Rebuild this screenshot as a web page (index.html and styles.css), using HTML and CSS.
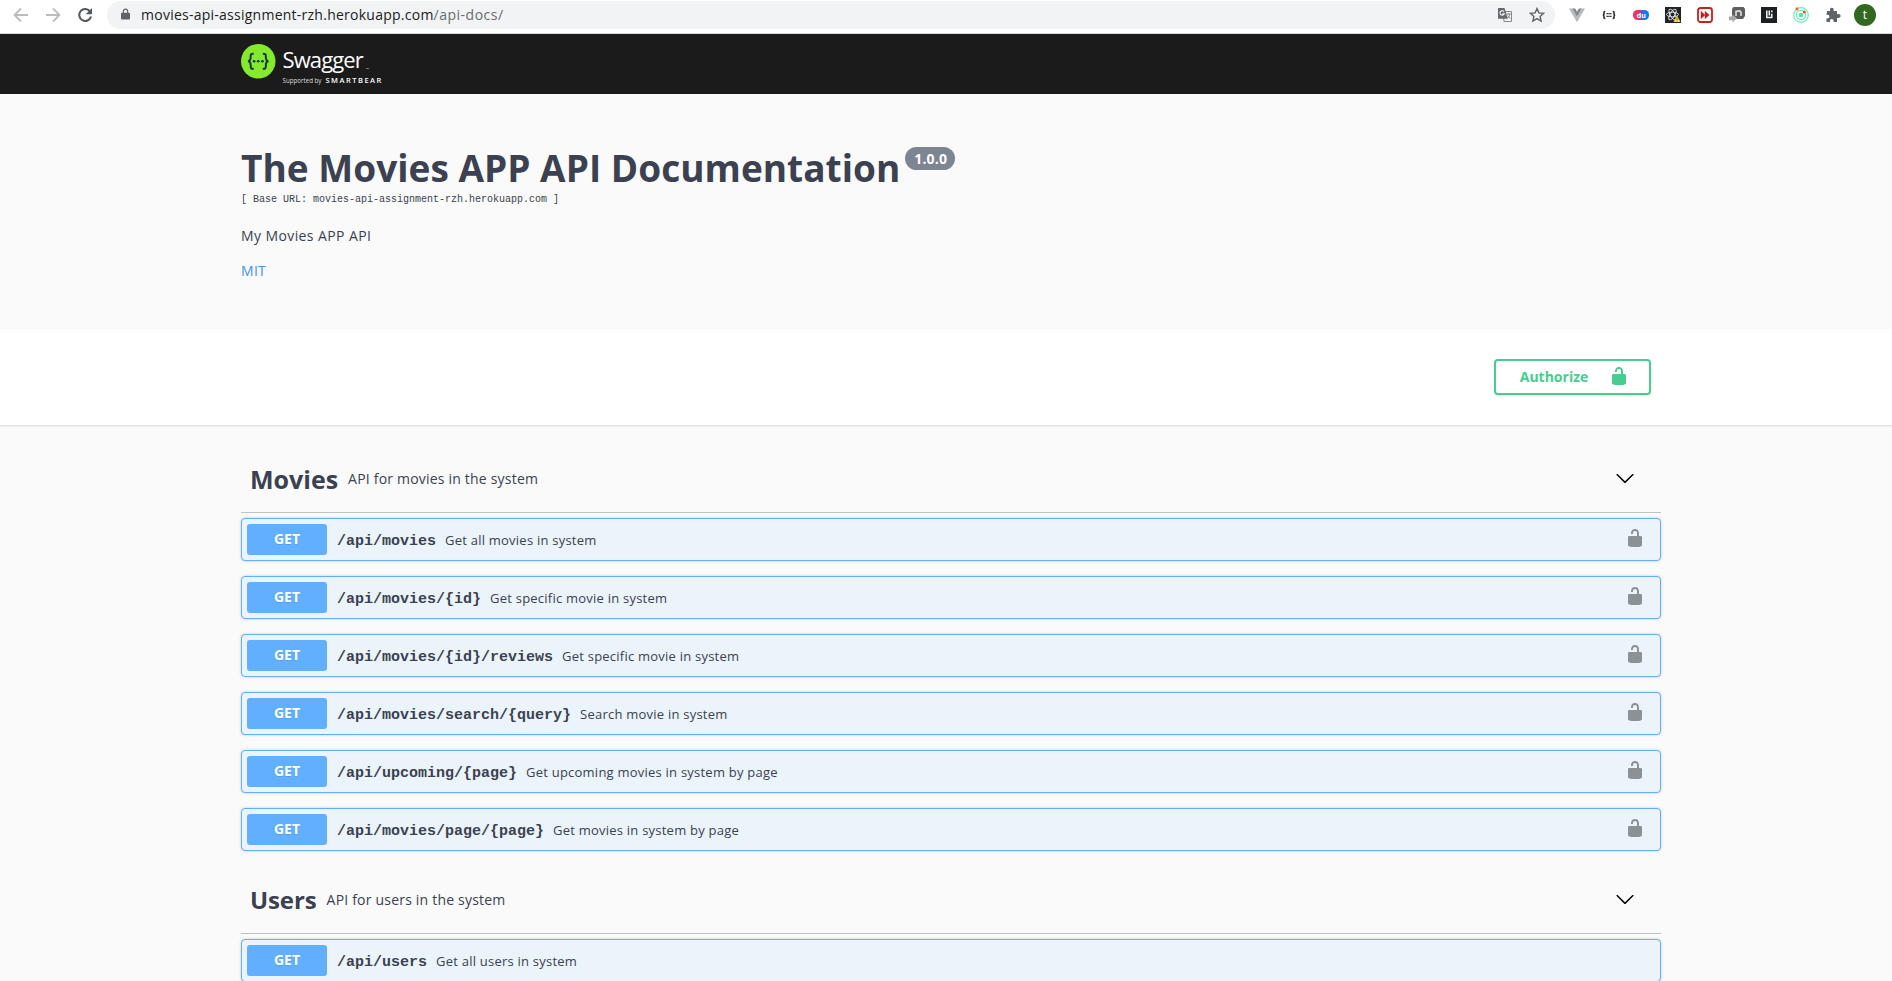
FILE: index.html
```
<!DOCTYPE html>
<html lang="en">
<head>
<meta charset="utf-8">
<title>Swagger UI</title>
<link rel="stylesheet" href="styles.css">
</head>
<body>
<svg class="defs" aria-hidden="true">
  <symbol id="unlocked" viewBox="0 0 20 20"><path d="M15.8 8H14V5.6C14 2.703 12.665 1 10 1 7.334 1 6 2.703 6 5.6V6h2v-.801C8 3.754 8.797 3 10 3c1.203 0 2 .754 2 2.199V8H4c-.553 0-1 .646-1 1.199V17c0 .549.428 1.139.951 1.307l1.197.387C5.672 18.861 6.55 19 7.1 19h5.8c.549 0 1.428-.139 1.951-.307l1.196-.387c.524-.167.953-.757.953-1.306V9.199C17 8.646 16.352 8 15.8 8z"/></symbol>
  <symbol id="arrow" viewBox="0 0 20 20"><path d="M17.418 6.109c.272-.268.709-.268.979 0s.271.701 0 .969l-7.908 7.83c-.27.268-.707.268-.979 0l-7.908-7.83c-.27-.268-.27-.701 0-.969.271-.268.709-.268.979 0L10 13.25l7.418-7.141z"/></symbol>
</svg>

<header class="browser">
  <svg class="nav" viewBox="0 0 16 16"><path d="M15 8H2M8 1.500L1.500 8L8 14.500" fill="none" stroke="#babcbe" stroke-width="1.800"/></svg>
  <svg class="nav" viewBox="0 0 16 16"><path d="M1 8h13M8 1.500L14.500 8L8 14.500" fill="none" stroke="#babcbe" stroke-width="1.800"/></svg>
  <svg class="nav" viewBox="0 0 16 16"><path d="M13.200 4.600A6 6 0 1 0 14 9.500" fill="none" stroke="#55595e" stroke-width="2.100"/><path d="M15 1v6.300H8.700z" fill="#55595e"/></svg>
  <div class="omnibox">
    <svg class="padlock" viewBox="0 0 10 12"><path d="M1 4.500h8a1 1 0 0 1 1 1V11a1 1 0 0 1-1 1H1a1 1 0 0 1-1-1V5.500a1 1 0 0 1 1-1z" fill="#5f6368"/><path d="M2.600 5V3a2.400 2.400 0 0 1 4.800 0v2" fill="none" stroke="#5f6368" stroke-width="1.300"/></svg>
    <div class="address"><span class="host">movies-api-assignment-rzh.herokuapp.com</span><span class="path">/api-docs/</span></div>
    <svg class="translate" viewBox="0 0 16 16"><path d="M6 4.500h8.500v10H7z" fill="#f1f3f4" stroke="#85898c"/><path d="M1 1h6.500l3.300 10.800H1z" fill="#66696d"/><path d="M7 4.600a2.200 2.200 0 1 0 .3 2.100H5.400" fill="none" stroke="#fff" stroke-width="1.100"/><path d="M9.300 7h4.500M11.600 6v1M13 7c-.5 2-1.500 3.500-3 4.500M10.600 8.500l2.700 3.200" fill="none" stroke="#85898c"/></svg>
    <svg class="star" viewBox="0 0 16 16"><path d="M8 1.600l1.900 4.300 4.700.4-3.500 3.100 1 4.600L8 11.600 3.900 14l1-4.600L1.400 6.300l4.700-.4z" fill="none" stroke="#5f6368" stroke-width="1.400"/></svg>
  </div>
  <div class="extensions">
    <svg viewBox="0 0 16 16"><path d="M0 1.500h3.200L8 9.800l4.800-8.300H16L8 15.200z" fill="#b9babb"/><path d="M3.200 1.500h3L8 4.700l1.800-3.200h3L8 9.800z" fill="#85898c"/></svg>
    <svg viewBox="0 0 16 16"><path d="M4.300 4.500c-1.800 0-1.300.8-1.300 2.200S2.500 8 1.800 8C2.500 8 3 8 3 9.300s-.500 2.200 1.300 2.200M11.700 4.500c1.800 0 1.300.8 1.300 2.200s.5 1.300 1.200 1.300c-.7 0-1.200 0-1.200 1.300s.5 2.200-1.300 2.200" fill="none" stroke="#222" stroke-width="1.500"/><path d="M5.500 6.600h5M5.500 9.300h5" stroke="#222" stroke-width="1.300" stroke-dasharray="1.400 .4"/></svg>
    <svg viewBox="0 0 16 16"><defs><linearGradient id="du"><stop offset=".3" stop-color="#f0355e"/><stop offset=".5" stop-color="#9048a0"/><stop offset=".65" stop-color="#1479ee"/></linearGradient></defs><rect y="3" width="16" height="10" rx="4.500" fill="url(#du)"/><text x="3.800" y="10.600" class="du">du</text></svg>
    <svg viewBox="0 0 16 16"><path fill="#20232a" d="M0 0h16v16H0z"/><g fill="none" stroke="#e8e8e8" stroke-width=".9"><ellipse cx="7.500" cy="7.500" rx="6" ry="2.300"/><ellipse cx="7.500" cy="7.500" rx="6" ry="2.300" transform="rotate(60 7.500 7.500)"/><ellipse cx="7.500" cy="7.500" rx="6" ry="2.300" transform="rotate(120 7.500 7.500)"/></g><path d="M12 8.500l3.500 6.500H8.500z" fill="#f6e62a"/><path d="M12 10.500v2.300M12 13.500v.8" stroke="#555"/></svg>
    <svg viewBox="0 0 16 16"><rect x="1" y="1" width="14" height="14" rx="2.500" fill="#fff" stroke="#c4211c" stroke-width="1.800"/><path d="M4 4.300v7.400L8 8zM8 4.300v7.400L12.300 8z" fill="#c4211c" stroke="#c4211c" stroke-width=".4"/></svg>
    <svg viewBox="0 0 16 16"><path d="M4.500 0h10L16 2v7l-2 3H5L3 9V2z" fill="#5c5e60"/><path d="M7 9V3.500M7 5.300c1-2 5-2 5 .7v3" fill="none" stroke="#ddd" stroke-width="1.600"/><path d="M0 9.500h3.500v-2L8 11.300 3.500 15.500v-2.300H0z" fill="#a5a6a8"/></svg>
    <svg viewBox="0 0 16 16"><path fill="#1e1f21" d="M0 0h16v16H0z"/><path d="M5.800 3.500v7h5V6.800M8.300 3.500v5M10.800 3.500v1.800" fill="none" stroke="#f4f4f4" stroke-width="1.500"/></svg>
    <svg viewBox="0 0 16 16"><g fill="none" stroke="#6eebb5" stroke-width="1.200"><circle cx="8" cy="8" r="7.300"/><circle cx="8" cy="8" r="4.700"/></g><circle cx="8" cy="8" r="2.300" fill="#55e5a0"/><circle cx="4" cy="1.900" r="1.600" fill="#f56b38"/><circle cx="11.300" cy="5" r="1.500" fill="#f34b2e"/></svg>
    <svg viewBox="0 0 16 16"><path d="M2 4h3.200C4.500 1.900 5.400.8 6.800.8S9.100 1.900 8.500 4H12v3.300c2.200-.7 3.600.3 3.600 1.700s-1.400 2.400-3.600 1.700V15H8.600c.4-2.100-.5-3-1.800-3s-2.200.9-1.800 3H1.500v-3.700c2.100.4 2.900-.5 2.900-1.700S3.500 7.500 1.500 7.900z" fill="#5f6368"/></svg>
  </div>
  <div class="avatar">t</div>
</header>

<div class="topbar"><div class="wrapper brand">
  <svg class="brand-mark" viewBox="0 0 34 34"><circle cx="17" cy="17" r="17" fill="#85ea2d"/><g fill="none" stroke="#173647" stroke-width="2"><path d="M12.500 9.500c-3 0-3 .8-3 3.500 0 2.500-.5 4-2.700 4 2.200 0 2.700 1.500 2.700 4 0 2.700 0 3.500 3 3.500M21.500 9.500c3 0 3 .8 3 3.500 0 2.500.5 4 2.700 4-2.200 0-2.700 1.500-2.700 4 0 2.700 0 3.500-3 3.500"/></g><g fill="#173647"><circle cx="12.900" cy="17" r="1.350"/><circle cx="17" cy="17" r="1.350"/><circle cx="21.100" cy="17" r="1.350"/></g></svg>
  <div class="brand-text"><div class="brand-name">Swagger<i class="tm"></i></div><div class="brand-by"><span>Supported by</span><b>SMARTBEAR</b></div></div>
</div></div>

<section class="wrapper info">
  <h1 class="title">The Movies APP API Documentation<span class="version">1.0.0</span></h1>
  <div class="base-url">[ Base URL: movies-api-assignment-rzh.herokuapp.com ]</div>
  <p class="description">My Movies APP API</p>
  <a class="license">MIT</a>
</section>

<section class="scheme"><div class="wrapper scheme-row">
  <button class="authorize"><span>Authorize</span><svg><use href="#unlocked"/></svg></button>
</div></section>

<main class="wrapper">
  <section class="tag">
    <div class="tag-head movies"><h2>Movies</h2><small>API for movies in the system</small><svg><use href="#arrow"/></svg></div>
    <div class="operations">
      <div class="op"><span class="method">GET</span><span class="op-path">/api/movies</span><span class="op-summary">Get all movies in system</span><svg><use href="#unlocked"/></svg></div>
      <div class="op"><span class="method">GET</span><span class="op-path">/api/movies/{id}</span><span class="op-summary">Get specific movie in system</span><svg><use href="#unlocked"/></svg></div>
      <div class="op"><span class="method">GET</span><span class="op-path">/api/movies/{id}/reviews</span><span class="op-summary">Get specific movie in system</span><svg><use href="#unlocked"/></svg></div>
      <div class="op"><span class="method">GET</span><span class="op-path">/api/movies/search/{query}</span><span class="op-summary">Search movie in system</span><svg><use href="#unlocked"/></svg></div>
      <div class="op"><span class="method">GET</span><span class="op-path">/api/upcoming/{page}</span><span class="op-summary">Get upcoming movies in system by page</span><svg><use href="#unlocked"/></svg></div>
      <div class="op"><span class="method">GET</span><span class="op-path">/api/movies/page/{page}</span><span class="op-summary">Get movies in system by page</span><svg><use href="#unlocked"/></svg></div>
    </div>
  </section>
  <section class="tag">
    <div class="tag-head users"><h2>Users</h2><small>API for users in the system</small><svg><use href="#arrow"/></svg></div>
    <div class="operations">
      <div class="op"><span class="method">GET</span><span class="op-path">/api/users</span><span class="op-summary">Get all users in system</span></div>
    </div>
  </section>
</main>
</body>
</html>
```
FILE: styles.css
```
* { box-sizing: border-box; }
html, body { height: 100%; }
body { margin: 0; overflow: hidden; background: #fafafa; color: #3b4151; font-family: "Open Sans", sans-serif; }
svg { display: block; flex: none; }
.defs { position: absolute; width: 0; height: 0; }
.wrapper { width: 1420px; margin-left: 241px; }

.browser { display: flex; align-items: flex-start; height: 34px; padding: 0 15px 0 13px; background: #fff; border-bottom: 1px solid #d6dbd6; }
.nav { width: 16px; height: 16px; margin: 7px 16px 0 0; }
.omnibox { display: flex; width: 1448px; height: 28px; margin: 1px 0 0 -2px; padding: 0 10px 0 14px; background: #f1f3f4; border-radius: 14px; }
.padlock { width: 9px; height: 12px; margin-top: 7px; }
.address { flex: 1; margin-left: 11px; font-size: 14px; line-height: 27px; letter-spacing: .25px; white-space: nowrap; }
.host { color: #202124; }
.path { color: #686c70; letter-spacing: .5px; }
.translate { width: 16px; height: 16px; margin-top: 6px; }
.star { width: 16px; height: 16px; margin: 6px 0 0 16px; }
.extensions { display: flex; gap: 16px; margin: 7px 0 0 14px; }
.extensions svg { width: 16px; height: 16px; }
.du { fill: #fff; font: bold 7px "Open Sans", sans-serif; }
.avatar { width: 22px; height: 22px; margin: 4px 0 0 13px; border-radius: 50%; background: #33691e; color: #fff; font-size: 12px; line-height: 21px; text-align: center; }

.topbar { height: 60px; background: #1b1b1b; }
.brand { display: flex; padding-top: 10px; }
.brand-mark { width: 34.500px; height: 34.500px; }
.brand-text { margin-left: 7px; color: #fff; }
.brand-name { display: flex; align-items: flex-end; height: 32px; font-size: 22px; line-height: 33px; letter-spacing: -.9px; }
.tm { width: 3px; height: 1px; margin: 0 0 7px 3px; background: #777; }
.brand-by { display: flex; align-items: baseline; gap: 4px; line-height: 8px; white-space: nowrap; }
.brand-by span { font-size: 6.200px; color: #ddd; }
.brand-by b { font-size: 7.500px; font-weight: 600; letter-spacing: 1.500px; }

.info { height: 235px; padding-top: 49px; }
.title { display: flex; align-items: flex-start; margin: 0; font-size: 37px; line-height: 50px; letter-spacing: .02px; white-space: nowrap; }
.version { height: 23px; margin: 4px 0 0 5px; padding: 0 8px 0 9px; border-radius: 12px; background: #7d8492; color: #fff; font-size: 14px; line-height: 23px; letter-spacing: .2px; }
.base-url { font: 10px/12px "Liberation Mono", monospace; margin-top: 1px; }
.description { margin: 12px 0 0; font-size: 14px; line-height: 35px; letter-spacing: .4px; }
.license { display: block; color: #4990e2; font-size: 14px; line-height: 35px; letter-spacing: .3px; }

.scheme { height: 96px; background: #fff; box-shadow: 0 1px 2px rgba(0,0,0,.15); }
.scheme-row { display: flex; justify-content: flex-end; padding: 30px 10px 0 0; }
.authorize { display: flex; width: 157px; height: 36px; padding: 0 0 0 23px; border: 2px solid #49cc90; border-radius: 4px; background: transparent; box-shadow: 0 1px 2px rgba(0,0,0,.1); color: #49cc90; font: bold 14px/32px "Open Sans", sans-serif; }
.authorize span { width: 70px; }
.authorize svg { width: 20px; height: 20px; margin: 5px 0 0 20px; fill: #49cc90; }

.tag-head { display: flex; height: 58px; margin-top: 25px; padding: 0 26px 0 9px; border-bottom: 1px solid #c0c1c5; }
.tag-head.movies { margin-top: 30px; }
.tag-head h2 { margin: 8px 10px 0 0; font-size: 25px; line-height: 32px; }
.tag-head.users h2 { font-size: 24px; letter-spacing: -.1px; }
.tag-head small { flex: 1; margin-top: 9px; font-size: 14px; line-height: 30px; letter-spacing: .2px; }
.tag-head svg { width: 20px; height: 20px; margin-top: 13px; }
.operations { display: grid; gap: 15px; padding-top: 5px; }
.op { display: flex; height: 43px; padding: 5px 18px 0 5px; border: 1px solid #61affe; border-radius: 4px; background: #ebf3fb; box-shadow: 0 0 3px rgba(0,0,0,.19); }
.method { width: 80px; height: 31px; border-radius: 3px; background: #61affe; color: #fff; font-size: 14px; font-weight: bold; line-height: 30px; text-align: center; text-shadow: 0 1px 0 rgba(0,0,0,.1); }
.op-path { margin-left: 10px; font: bold 15px/35px "Liberation Mono", monospace; }
.op-summary { flex: 1; margin-left: 9px; font-size: 13px; line-height: 32px; letter-spacing: .23px; }
.op svg { width: 20px; height: 20px; margin-top: 4px; margin-right: -3px; fill: #8c9196; }
```
